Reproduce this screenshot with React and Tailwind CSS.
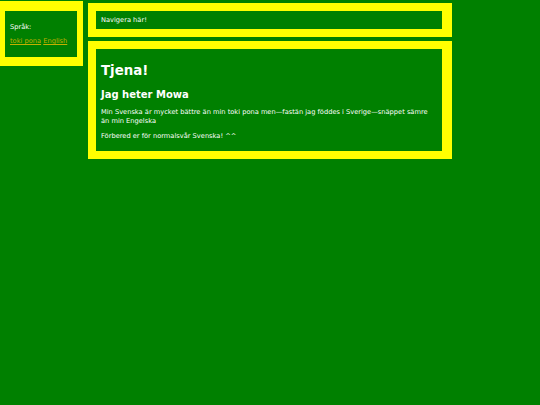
import React from 'react';

// little personal homepage: language box on the left, nav + intro on the right
const languages = [
  { label: 'toki pona', href: '#tp' },
  { label: 'English', href: '#en' },
];

const App = () => {
  return (
    <div className="min-h-screen bg-[#008000] text-white text-[6.67px] leading-[normal] font-[family-name:'DejaVu_Sans',Verdana,sans-serif] flex items-start">
      <aside className="w-[83px] mt-[1px] border-l-[5px] border-r-[6px] border-t-[10px] border-b-[9px] border-[#ffff00] p-[5px]">
        <p className="my-[6.67px]">Språk:</p>
        <p className="my-[6.67px]">
          {languages.map((lang, i) => (
            <React.Fragment key={lang.href}>
              {i > 0 && ' '}
              <a href={lang.href} className="underline text-[#c2b000]">{lang.label}</a>
            </React.Fragment>
          ))}
        </p>
      </aside>

      <div className="ml-[5px] mt-[3px] w-[364px] flex flex-col gap-[4px]">
        <nav className="border-[8px] border-r-[10px] border-[#ffff00] p-[5px]">
          Navigera här!
        </nav>

        <main className="border-[8px] border-r-[10px] border-[#ffff00] p-[5px]">
          <h1 className="text-[13.33px] leading-[normal] font-bold mt-[9px] mb-[11px]">Tjena!</h1>
          <h2 className="text-[10px] leading-[normal] font-bold my-[8.3px]">Jag heter Mowa</h2>
          <p className="my-[5.5px] leading-[9px]">
            Min Svenska är mycket bättre än min toki pona men—fastän jag föddes i Sverige—snäppet sämre än min Engelska
          </p>
          <p className="my-[5.5px] leading-[9px]">Förbered er för normalsvår Svenska! ^^</p>
        </main>
      </div>
    </div>
  );
};

export default App;
